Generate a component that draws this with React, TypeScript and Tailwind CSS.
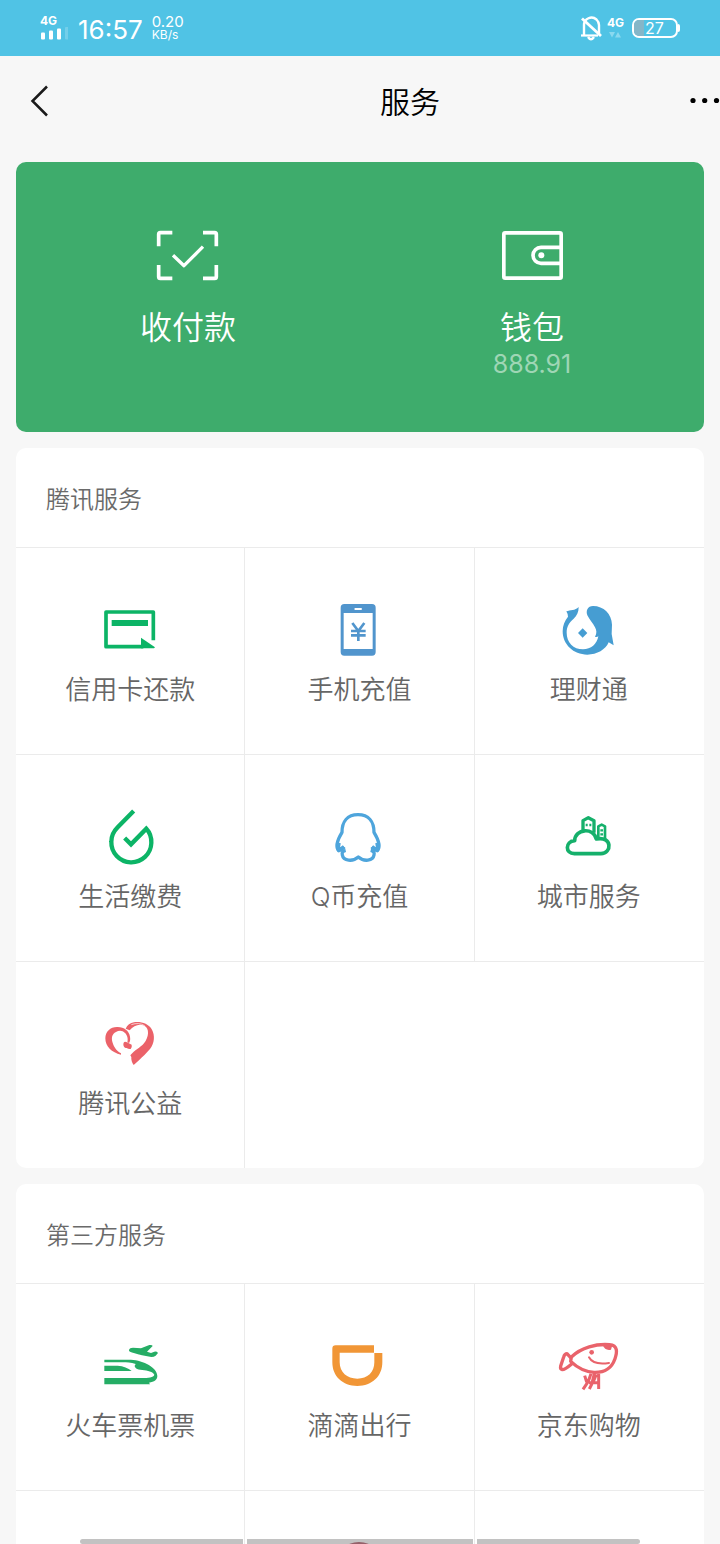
import type { ReactNode } from "react";

function StatusBar() {
  return (
    <div className="flex h-14 shrink-0 items-center justify-between bg-[#50c3e5] px-10 font-normal text-white">
      <div className="flex items-center">
        <div className="flex w-7 flex-col">
          <span className="text-[12px] font-bold leading-[12px]">4G</span>
          <svg viewBox="0 0 28 14" className="h-[14px] w-7" aria-hidden="true">
            <rect x="1" y="5.500" width="4" height="7" rx="1" fill="#fff" />
            <rect x="9" y="3.500" width="4" height="9" rx="1" fill="#fff" />
            <rect x="17" y="1.500" width="4" height="11" rx="1" fill="#fff" />
            <rect x="25" y="0" width="4" height="12.500" rx="1" fill="#fff" opacity="0.2" />
          </svg>
        </div>
        <span className="ml-[10px] pt-1 text-[26px] leading-8">16:57</span>
        <div className="ml-[9px] flex flex-col">
          <span className="text-[15px] leading-[14px]">0.20</span>
          <span className="text-[12px] leading-[12px]">KB/s</span>
        </div>
      </div>
      <div className="flex items-center">
        <svg viewBox="0 0 24 26" className="h-[26px] w-6" fill="none" stroke="#fff" aria-hidden="true">
          <path d="M5 20V10a7.500 7.500 0 0 1 12.500-5.500Q20 7 20 10v9" strokeWidth="2.400" />
          <path d="M2 20.500h17" strokeWidth="2.200" />
          <path d="M9 22q3 4.500 6 0" strokeWidth="2.400" />
          <path d="M3 3.500 22 21" strokeWidth="2.800" />
        </svg>
        <div className="ml-1 flex flex-col items-center">
          <span className="text-[12px] font-bold leading-[12px]">4G</span>
          <svg viewBox="0 0 14 8" className="mt-[2px] h-2 w-[14px]" fill="#8ad9ef" aria-hidden="true">
            <path d="M1 1h6L4 6.500zM7 6.500h6L10 1z" />
          </svg>
        </div>
        <div className="ml-2 flex items-center">
          <div className="flex h-5 w-[46px] overflow-hidden rounded-[7px] border-2 border-white">
            <span className="w-[10px] bg-[#85b6c8]" />
            <span className="pl-px text-[16px] leading-4">27</span>
          </div>
          <span className="h-2 w-[2px] rounded-r bg-white" />
        </div>
      </div>
    </div>
  );
}

function CreditCardIcon() {
  return (
    <svg viewBox="144 24 192 192" className="size-16" fill="none" stroke="#0cb466" aria-hidden="true">
      <path d="M310 151V66H168v104h112" strokeWidth="11" strokeLinejoin="round" />
      <path d="M185 99h109" strokeWidth="18" />
      <path d="M273 143l42 29-3 3h-39z" fill="#0cb466" stroke="none" />
    </svg>
  );
}

function PhoneIcon() {
  return (
    <svg viewBox="112 24 192 192" className="size-16" aria-hidden="true">
      <path
        fillRule="evenodd"
        fill="#5195cd"
        d="M164 42h83q11 0 11 11v133q0 11-11 11h-83q-11 0-11-11V53q0-11 11-11zM162 69v108h87V69zM197 54q-3 0-3 3t3 3h17q3 0 3-3t-3-3z"
      />
      <path d="M188 99l18 24 18-24M184 123h44M184 136h44M206 122v31" fill="none" stroke="#5195cd" strokeWidth="8" />
    </svg>
  );
}

function WealthIcon() {
  return (
    <svg viewBox="82 24 192 192" className="size-16" fill="#469dd2" aria-hidden="true">
      <path d="M110 64C122 60 136 62 147 51C147 66 142 77 132 86C118 97 111 110 111 128C111 157 131 178 160 178C184 178 202 162 206 139Q201 143 196 140C202 130 201 121 196 112C190 100 180 90 173 76C168 62 174 48 190 48C222 48 246 72 247 104L246 132L252 166L237 157C228 179 202 194 173 194C131 194 99 163 99 124C99 107 105 92 115 80Q114 70 110 64Z" />
      <path d="M159 115l14 14-14 14-14-14z" />
    </svg>
  );
}

function UtilitiesIcon() {
  return (
    <svg viewBox="114 27 192 192" className="size-16" fill="none" stroke="#0cb466" strokeWidth="13" aria-hidden="true">
      <path d="M221 45l-48 49q-19 19-19 43a60 60 0 0 0 120 4q1-26-15-43l-46 47-19-19" />
    </svg>
  );
}

function PenguinIcon() {
  return (
    <svg viewBox="113 27 192 192" className="size-16" fill="none" stroke="#4ea5dc" strokeWidth="10" strokeLinejoin="round" aria-hidden="true">
      <path d="M165 153c-5 6-11 10-17 11-9-10-4-32 10-55 0-32 16-53 48-53s48 21 48 53c14 23 19 45 10 55-6-1-12-5-17-11" />
      <path d="M149 140q-4 13 0 23l15-11M263 140q4 13 0 23l-15-11" strokeWidth="11" />
      <path d="M169 163c-9 2-12 7-10 14 3 18 31 21 48 6 17 15 44 12 47-6 2-7-1-12-10-14" />
    </svg>
  );
}

function CityIcon() {
  return (
    <svg viewBox="801 27 192 192" className="size-16" fill="none" stroke="#15b06b" strokeWidth="10" strokeLinejoin="round" aria-hidden="true">
      <path d="M879 105V74l16-9 17 9v36" />
      <path d="M925 124V91l10-5 10 5v38" strokeWidth="8" />
      <path d="M887 87h6M898 87h6M931 103h8M931 115h8" strokeWidth="7" />
      <path d="M853 173c-28 0-28-37 1-39 1-36 57-41 65-5 49-10 47 44 14 44z" strokeWidth="11" />
    </svg>
  );
}

function CharityIcon() {
  return (
    <svg viewBox="114 33 192 192" className="size-16" fill="#eb6269" aria-hidden="true">
      <path d="M183 161c-28-6-47-25-47-49 0-21 16-35 37-34 20 0 34 12 37 29 2 10-1 17-3 19q-4-1-5-2c3-9 0-22-7-28-8-8-18-8-27-3-12 6-14 17-11 29 4 15 11 26 26 35z" />
      <path d="M197 83c4-11 14-17 25-19 20-3 44 4 54 22 9 17 8 40-6 58-11 13-22 23-33 34l-16 14c-5-6-8-16-7-24l-3-5c13-16 29-22 41-36 15-19 17-45 1-53-15-7-32-1-44 14z" />
      <path d="M191 125q3-5 10-1l14 7q2 9-3 13-7 1-12-3c-7 0-12-7-9-16z" />
      <path d="M214 71q22-8 40 3" fill="none" stroke="#fff" strokeWidth="2" />
    </svg>
  );
}

function TravelIcon() {
  return (
    <svg viewBox="114 39 192 192" className="size-16" fill="#25ad65" aria-hidden="true">
      <path d="M207 87q2-7 12-7l24 2 25-10q9-1 10 3l-17 17 12 4 10-4q8-1 11 4l-7 8q-5 4-13 4l-28-5q-26-7-36-11-4-2-3-5z" />
      <path d="M133 116h80c38 2 79 24 79 49 0 11-9 18-25 20l3 5H133v-19h112c20 0 36-2 38-10-4-8-20-13-36-14-18-1-23-8-23-13l3-5c-14-4-28-5-38-5h-56z" />
      <path d="M133 134h40q26 2 42 16h-82z" />
    </svg>
  );
}

function RideIcon() {
  return (
    <svg viewBox="803 39 192 192" className="size-16" fill="#f19636" aria-hidden="true">
      <path d="M829 73h115v22H841v29c0 30 22 49 53 49s51-19 51-49V96h24v28c0 42-31 71-75 71s-75-29-75-71V83q0-10 10-10z" />
    </svg>
  );
}

function ShoppingIcon() {
  return (
    <svg viewBox="111 39 192 192" className="size-16" fill="none" stroke="#e9636b" strokeWidth="10" strokeLinecap="round" strokeLinejoin="round" aria-hidden="true">
      <path d="M154 108c30-29 75-40 114-37 27 2 23 24 17 42-11 31-31 42-63 41-30-2-49-13-70-33z" />
      <path d="M152 110l-11-12q-7 0-10 10l-9 27q-2 9 5 11 8 0 28-17" />
      <path d="M248 72l29 1-4 13q-18 4-25-14z" fill="#e9636b" stroke="none" />
      <path d="M207 109c9 17 29 22 60 17" strokeWidth="6" />
      <circle cx="215" cy="94" r="7" fill="#e9636b" stroke="none" />
      <path d="M213 158l-8 23-16 24M194 164l6 19M223 158l-8 32-7 14M207 185h28M236 158v46M229 160l-10 24" strokeWidth="9" strokeLinecap="butt" />
    </svg>
  );
}

function MoreServiceIcon() {
  return (
    <svg viewBox="0 0 64 64" className="size-16" aria-hidden="true">
      <circle cx="32" cy="25" r="24" fill="#c47f8b" />
    </svg>
  );
}

type Service = { name: string; label: string; icon: ReactNode };

const tencent: Service[] = [
  { name: "card", label: "信用卡还款", icon: <CreditCardIcon /> },
  { name: "phone", label: "手机充值", icon: <PhoneIcon /> },
  { name: "wealth", label: "理财通", icon: <WealthIcon /> },
  { name: "bills", label: "生活缴费", icon: <UtilitiesIcon /> },
  { name: "qcoin", label: "Q币充值", icon: <PenguinIcon /> },
  { name: "city", label: "城市服务", icon: <CityIcon /> },
  { name: "charity", label: "腾讯公益", icon: <CharityIcon /> },
];

const thirdParty: Service[] = [
  { name: "travel", label: "火车票机票", icon: <TravelIcon /> },
  { name: "ride", label: "滴滴出行", icon: <RideIcon /> },
  { name: "shopping", label: "京东购物", icon: <ShoppingIcon /> },
  { name: "next-1", label: "", icon: null },
  { name: "next-2", label: "", icon: <MoreServiceIcon /> },
  { name: "next-3", label: "", icon: null },
];

function ServiceSection({ title, items }: { title: string; items: Service[] }) {
  return (
    <section className="shrink-0 overflow-hidden rounded-[10px] bg-white">
      <h2 className="flex h-[99px] items-center px-[30px] pt-1 text-[24px] text-[#6a6a6a]">{title}</h2>
      <ul className="grid auto-rows-[207px] grid-cols-3">
        {items.map((item) => (
          <li key={item.name} className="group border-t border-[#ebebeb]">
            <a
              href="#"
              className="flex h-full flex-col items-center border-r border-[#ebebeb] pt-[50px] text-[26px] leading-9 text-[#666] group-nth-[3n]:border-transparent"
            >
              {item.icon}
              <span className="mt-[10px]">{item.label}</span>
            </a>
          </li>
        ))}
        {items.length % 3 === 1 && <li className="col-span-2 border-t border-[#ebebeb]" />}
      </ul>
    </section>
  );
}

export default function App() {
  return (
    <div className="relative flex h-screen flex-col overflow-hidden bg-[#f7f7f7] font-['Inter','Noto_Sans_CJK_SC',sans-serif] font-[350]">
      <StatusBar />
      <header className="flex h-[90px] shrink-0 items-center">
        <div className="w-[132px] pl-6">
          <button type="button" aria-label="返回" className="block">
            <svg viewBox="0 0 32 32" className="size-8" fill="none" stroke="#1a1a1a" strokeWidth="2.500" aria-hidden="true">
              <path d="M23 1.500 8.500 16 23 30.500" />
            </svg>
          </button>
        </div>
        <h1 className="flex-1 pt-[2px] text-center text-[30px] text-black">服务</h1>
        <button type="button" aria-label="更多" className="w-8">
          <svg viewBox="0 0 32 32" className="size-8" aria-hidden="true">
            <circle cx="5" cy="15.500" r="2.600" />
            <circle cx="16.700" cy="15.500" r="2.600" />
            <circle cx="28.500" cy="15.500" r="2.600" />
          </svg>
        </button>
      </header>
      <main className="flex min-h-0 flex-1 flex-col gap-4 overflow-hidden px-4 pt-4">
        <div className="grid shrink-0 grid-cols-2 rounded-[10px] bg-[#3eac6c] pb-[52px] pt-[62px] text-white">
          <a href="#" className="flex flex-col items-center">
            <svg viewBox="108 42 192 192" className="size-16" fill="none" stroke="#fff" strokeWidth="11" aria-hidden="true">
              <path d="M116 109V73q0-5 5-5h36M249 68h35q5 0 5 5v36M289 165v35q0 5-5 5h-35M157 205h-36q-5 0-5-5v-35" />
              <path d="M159 136l33 31 57-57" strokeWidth="10" strokeLinejoin="round" />
            </svg>
            <span className="mt-5 text-[32px] leading-10">收付款</span>
          </a>
          <a href="#" className="flex flex-col items-center">
            <svg viewBox="90 42 192 192" className="size-16" fill="none" stroke="#fff" strokeWidth="11" aria-hidden="true">
              <rect x="101.500" y="68.500" width="172" height="136" rx="4" />
              <path d="M273 112h-60a24 24 0 0 0 0 48h60" />
              <circle cx="214" cy="136" r="9" fill="#fff" stroke="none" />
            </svg>
            <span className="mt-5 text-[32px] leading-10">钱包</span>
            <span className="text-[25px] font-normal leading-8 text-[#9fd6b5]">888.91</span>
          </a>
        </div>
        <ServiceSection title="腾讯服务" items={tencent} />
        <ServiceSection title="第三方服务" items={thirdParty} />
      </main>
      <div className="absolute inset-x-20 bottom-0 grid grid-cols-[163fr_226fr_163fr] gap-1" aria-hidden="true">
        <span className="h-[5px] rounded-l bg-black/24" />
        <span className="h-[5px] bg-black/24" />
        <span className="h-[5px] rounded-r bg-black/24" />
      </div>
    </div>
  );
}
